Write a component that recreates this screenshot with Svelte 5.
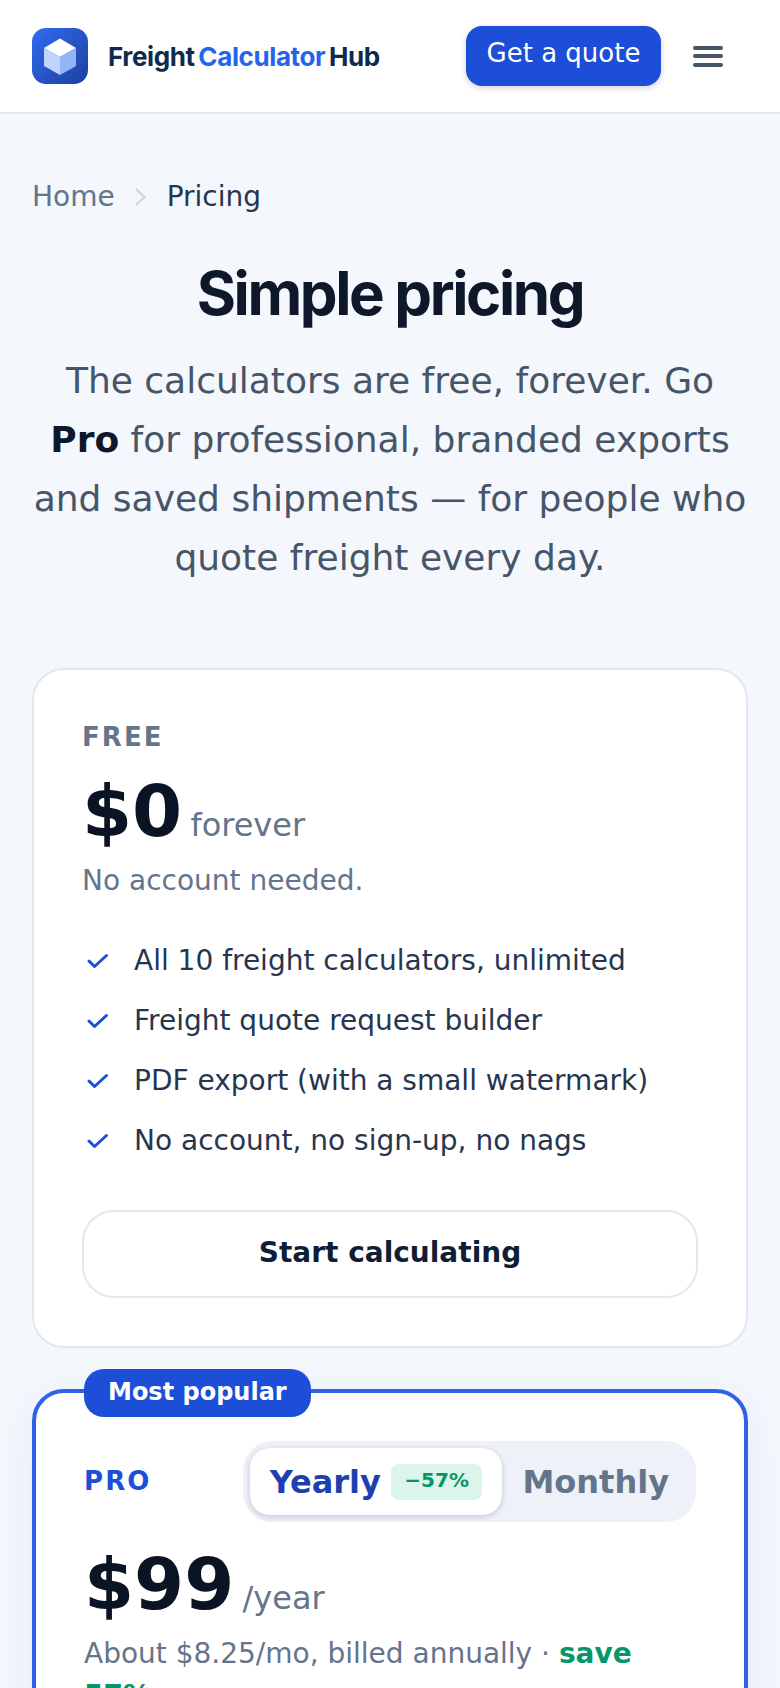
<script>
  const freeFeatures = [
    "All 10 freight calculators, unlimited",
    "Freight quote request builder",
    "PDF export (with a small watermark)",
    "No account, no sign-up, no nags",
  ];
</script>

<header class="topbar">
  <a class="brand" href="#home">
    <span class="logo">
      <svg viewBox="0 0 56 56" width="56" height="56">
        <defs>
          <linearGradient id="logoBg" x1="0" y1="0" x2="1" y2="1">
            <stop offset="0" stop-color="#2f6bf0" />
            <stop offset="1" stop-color="#1e40a0" />
          </linearGradient>
        </defs>
        <rect width="56" height="56" rx="14" fill="url(#logoBg)" />
        <path d="M28 10.5 L44 20 L28 29 L12 20 Z" fill="#fff" />
        <path d="M12 20 L28 29 L28 47 L12 38 Z" fill="#bfd4fd" />
        <path d="M44 20 L28 29 L28 47 L44 38 Z" fill="#93b5f3" />
      </svg>
    </span>
    <span class="brand-name">Freight <em>Calculator</em> Hub</span>
  </a>
  <div class="actions">
    <button class="quote">Get a quote</button>
    <button class="burger" aria-label="Menu"><span></span><span></span><span></span></button>
  </div>
</header>

<main>
  <nav class="crumbs">
    <a href="#home">Home</a>
    <svg class="chev" viewBox="0 0 12 20" width="12" height="20"><path d="M1 2 L9.5 10 L1 18" fill="none" stroke="#cbd5e1" stroke-width="2" /></svg>
    <span>Pricing</span>
  </nav>

  <section class="intro">
    <h1>Simple pricing</h1>
    <p>The calculators are free, forever. Go <strong>Pro</strong> for professional, branded exports and saved shipments — for people who quote freight every day.</p>
  </section>

  <section class="plans">
    <article class="card">
      <div class="tier">FREE</div>
      <div class="price"><b>$0</b> <span>forever</span></div>
      <p class="note">No account needed.</p>
      <ul>
        {#each freeFeatures as item}
          <li>
            <svg viewBox="0 0 28 28" width="28" height="28"><path d="M7 15 L12.5 20.5 L24.5 9.5" fill="none" stroke="#1d4ed8" stroke-width="3" stroke-linecap="round" stroke-linejoin="round" /></svg>
            {item}
          </li>
        {/each}
      </ul>
      <a class="cta" href="#start">Start calculating</a>
    </article>

    <article class="card pro">
      <span class="badge">Most popular</span>
      <div class="pro-head">
        <div class="tier">PRO</div>
        <div class="toggle">
          <button class="opt active">Yearly <span class="off">−57%</span></button>
          <button class="opt">Monthly</button>
        </div>
      </div>
      <div class="price"><b>$99</b> <span>/year</span></div>
      <p class="note">About $8.25/mo, billed annually · <strong>save 57%</strong></p>
    </article>
  </section>
</main>

<style>
  :global(body) {
    background: #f4f7fc;
    font-family: "DejaVu Sans", sans-serif;
    color: #0f172a;
    height: 1688px;
    overflow: hidden;
  }

  button {
    font-family: inherit;
    border: 0;
    cursor: pointer;
  }

  a {
    text-decoration: none;
    color: inherit;
  }

  .topbar {
    display: flex;
    align-items: center;
    justify-content: space-between;
    height: 112px;
    padding: 0 32px;
    background: #fff;
    border-bottom: 2px solid #e2e8f0;
  }

  .brand {
    display: flex;
    align-items: center;
    gap: 20px;
  }

  .logo {
    display: block;
    width: 56px;
    height: 56px;
  }

  .brand-name {
    font-family: Inter, sans-serif;
    font-size: 26px;
    font-weight: 700;
    letter-spacing: -0.015em;
    word-spacing: -0.08em;
    color: #0f2a4d;
  }

  .brand-name em {
    font-style: normal;
    color: #2563eb;
  }

  .actions {
    display: flex;
    align-items: center;
    gap: 32px;
  }

  .quote {
    height: 60px;
    width: 195px;
    padding: 0 0 6px;
    border-radius: 16px;
    background: #1d4ed8;
    color: #fff;
    font-size: 26px;
    box-shadow: 0 2px 6px rgba(15, 23, 42, 0.18);
  }

  .burger {
    display: flex;
    flex-direction: column;
    gap: 4.5px;
    width: 30px;
    padding: 0;
    margin-right: 25px;
    background: none;
  }

  .burger span {
    display: block;
    height: 4px;
    border-radius: 2px;
    background: #475569;
  }

  main {
    padding: 66px 32px 0;
  }

  .crumbs {
    display: flex;
    align-items: center;
    gap: 20px;
    font-size: 28px;
    color: #26364f;
  }

  .crumbs a {
    color: #64748b;
  }

  .intro {
    text-align: center;
    margin-top: 44px;
  }

  h1 {
    margin: 0;
    font-family: Inter, sans-serif;
    font-size: 60px;
    font-weight: 700;
    letter-spacing: -0.04em;
    line-height: 1.2;
    color: #0f172a;
  }

  .intro p {
    margin: 22px 0 0;
    font-size: 36px;
    line-height: 59px;
    color: #475569;
  }

  .intro strong {
    color: #0f172a;
  }

  .plans {
    display: flex;
    flex-direction: column;
    gap: 41px;
    margin-top: 81px;
  }

  .card {
    position: relative;
    padding: 48px;
    background: #fff;
    border: 2px solid #e2e8f0;
    border-radius: 32px;
  }

  .tier {
    padding-top: 4px;
    font-size: 26px;
    font-weight: 700;
    letter-spacing: 0.08em;
    color: #64748b;
  }

  .price {
    margin-top: 20px;
    font-size: 32px;
    word-spacing: -2px;
    color: #64748b;
  }

  .price b {
    font-size: 72px;
    color: #0b1424;
    line-height: 1.1;
  }

  .note {
    margin: 9px 0 0;
    font-size: 28px;
    line-height: 1.5;
    color: #64748b;
  }

  .note strong {
    color: #059669;
  }

  ul {
    list-style: none;
    margin: 28px 0 0;
    padding: 0;
  }

  li {
    display: flex;
    align-items: center;
    gap: 24px;
    height: 60px;
    font-size: 28px;
    color: #26364f;
  }

  .cta {
    display: block;
    margin-top: 40px;
    height: 84px;
    line-height: 81px;
    text-align: center;
    border: 2px solid #e2e8f0;
    border-radius: 32px;
    font-size: 28px;
    font-weight: 700;
    color: #0f1d35;
  }

  .pro {
    border: 4px solid #2f62e8;
    box-shadow: 0 12px 40px rgba(29, 78, 216, 0.08);
  }

  .pro .price {
    margin-top: 23px;
  }

  .pro .note {
    margin-top: 9px;
  }

  .badge {
    position: absolute;
    top: -24px;
    left: 48px;
    height: 48px;
    line-height: 46px;
    padding: 0 24px;
    border-radius: 20px;
    background: #1d4ed8;
    color: #fff;
    font-size: 24px;
    font-weight: 700;
  }

  .pro .tier {
    padding: 0 0 2px;
    color: #1d4ed8;
  }

  .pro-head {
    display: flex;
    align-items: center;
    justify-content: space-between;
  }

  .toggle {
    display: flex;
    padding: 7px;
    border-radius: 30px;
    background: #eef1f8;
  }

  .opt {
    display: flex;
    align-items: center;
    gap: 10px;
    height: 67px;
    padding: 0 20px;
    border-radius: 20px;
    background: none;
    font-size: 32px;
    font-weight: 700;
    color: #64748b;
  }

  .opt.active {
    background: #fff;
    color: #1e40af;
    box-shadow: 0 2px 6px rgba(15, 23, 42, 0.18);
  }

  .off {
    padding: 4px 13.5px 8px;
    border-radius: 8px;
    background: #dcf5ea;
    color: #059669;
    font-size: 20px;
  }
</style>
